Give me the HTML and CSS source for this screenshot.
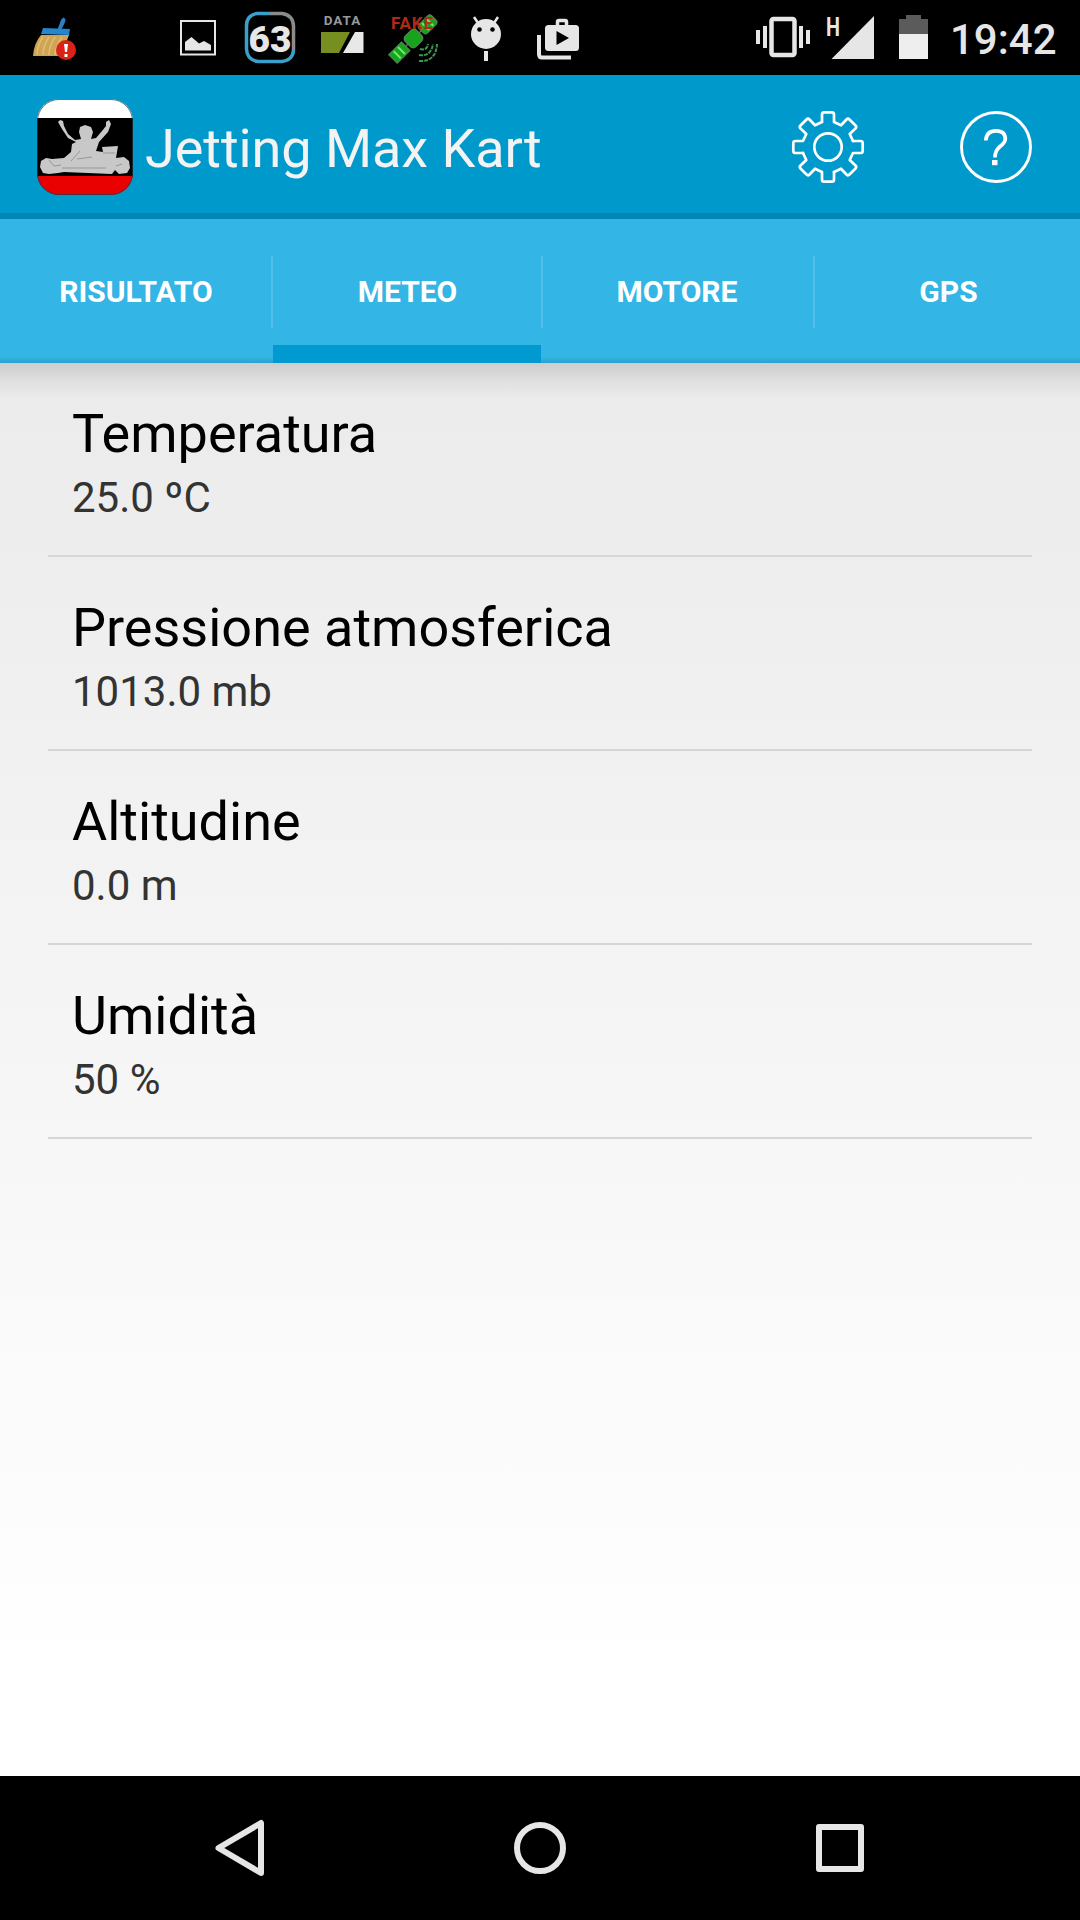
FILE: index.html
```html
<!DOCTYPE html>
<html lang="it">
<head>
<meta charset="utf-8">
<title>Jetting Max Kart</title>
<link rel="stylesheet" href="styles.css">
</head>
<body>
<header class="status">
  <div class="notifications">
    <svg class="slot" viewBox="18 0 72 75">
      <path d="M57 31 61 20Q64 15 65.500 20Q65 24 60 31Z" fill="#2c7fc0"/>
      <path d="M43 28 70 29 69 35 41 34Z" fill="#2487cc"/>
      <path d="M41 35 69 35Q64 46 65 56L33 56Q34 43 41 35Z" fill="#cfa555"/>
      <path d="M43 37Q37 46 37 55M49 37Q43 46 43 55M55 37Q49 46 49 55M62 37Q56 46 55 55" stroke="#e2bd6e" stroke-width="1.500" fill="none"/>
      <circle cx="66" cy="50" r="10" fill="#d92317"/>
      <path d="M64 44h4l-1 8h-2zM64.500 54h3v3h-3z" fill="#fff"/>
    </svg>
    <svg class="slot" viewBox="90 0 72 75"></svg>
    <svg class="slot" viewBox="162 0 72 75">
      <rect x="181" y="21" width="34" height="33.500" fill="none" stroke="#e6e6e6" stroke-width="2"/>
      <path d="M185 50.500V42L191.500 37 199 43.500 204 41 211 45V50.500Z" fill="#e6e6e6"/>
    </svg>
    <svg class="slot" viewBox="234 0 72 75">
      <path d="M270 13.500H257Q246.500 15 246.500 26V49Q247 60 258 61.500H282Q293 60 293.500 50" fill="none" stroke="#3b9fc9" stroke-width="3.500"/>
      <path d="M270 13.500H282Q293 15 293.500 26V50" fill="none" stroke="#8b8b8b" stroke-width="3.500"/>
      <text class="badge-text" x="270" y="51.500" text-anchor="middle">63</text>
    </svg>
    <svg class="slot" viewBox="306 0 72 75">
      <text class="data-text" x="342.500" y="25" text-anchor="middle">DATA</text>
      <path d="M321 32H350L339 53H321Z" fill="#778e20"/><path d="M355 32H363.500V53H343Z" fill="#e8e8e8"/>
    </svg>
    <svg class="slot" viewBox="378 0 72 75">
      <g transform="translate(413.500 38.500) rotate(-45)" fill="#17a31c" stroke="#5b7f5b" stroke-width="1.200">
        <path d="M-12 0H12"/>
        <rect x="-29" y="-6" width="18" height="12"/><path d="M-23-5V5M-17-5V5" stroke="#6bea6b" stroke-width="2"/>
        <rect x="-8" y="-7.500" width="16" height="15" rx="4"/>
        <rect x="11" y="-6" width="18" height="12" rx="3"/><path d="M17-5V5M23-5V5" stroke="#6bea6b" stroke-width="2"/>
      </g>
      <g fill="none" stroke="#3a9950" stroke-width="2" stroke-dasharray="4 1"><path d="M420 49Q427 51 428 44"/><path d="M419 55Q431 57 433 44"/><path d="M419 61Q436 62 437 44"/></g>
      <text class="fake-text" x="391" y="29" textLength="42">FAKE</text>
    </svg>
    <svg class="slot" viewBox="450 0 72 75">
      <path d="M474 17 478 23M498 17 494 23" stroke="#e6e6e6" stroke-width="2.500"/>
      <circle cx="486" cy="34" r="15" fill="#e6e6e6"/><circle cx="479.500" cy="29.500" r="2.300"/><circle cx="492.500" cy="29.500" r="2.300"/>
      <path d="M484 51h4v10h-4z" fill="#e6e6e6"/>
    </svg>
    <svg class="slot" viewBox="522 0 72 75">
      <path d="M539 35V54Q539 57.500 542 57.500H571" stroke="#e6e6e6" stroke-width="4" fill="none"/>
      <path d="M557.500 26V22Q557.500 20.500 559 20.500H565Q566.500 20.500 566.500 22V26" stroke="#e6e6e6" stroke-width="3.500" fill="none"/>
      <rect x="545" y="25" width="34" height="26" rx="3.500" fill="#e6e6e6"/><path d="M556.500 31 569 38 556.500 45Z"/>
    </svg>
  </div>
  <div class="system">
    <svg width="310" height="75" viewBox="750 0 310 75" fill="#e6e6e6">
      <path d="M756 30h4v14h-4zM763 26h4v22h-4zM799 26h4v22h-4zM806 30h4v14h-4z"/>
      <rect x="771.500" y="19" width="23" height="36" rx="2" fill="none" stroke="#e6e6e6" stroke-width="4.500"/>
      <text class="net-text" x="826" y="35.500" textLength="14" lengthAdjust="spacingAndGlyphs">H</text>
      <path d="M874 16V59H831.500Z"/>
      <path d="M899 34V19H906V15H921V19H928V34Z" fill="#5b5b5b"/><path d="M899 34H928V59H899Z" fill="#eee"/>
      <text class="clock" x="950" y="54">19:42</text>
    </svg>
  </div>
</header>
<div class="actionbar">
  <svg class="logo" viewBox="0 0 96 96">
    <defs><clipPath id="logo-shape"><rect width="96" height="96" rx="22"/></clipPath></defs>
    <g clip-path="url(#logo-shape)"><path fill="#fff" d="M0 0h96v20H0z"/><path d="M0 19h96v59H0z"/><path fill="#e90000" d="M0 77h96v19H0z"/></g>
    <rect x=".5" y=".5" width="95" height="95" rx="21.500" fill="none" stroke="#1a3c49" stroke-opacity=".7"/>
    <path fill="#c8c8c8" d="M21 23 23 21 26 22 27 27 31 35 38 41 44 40 42 33 43 28 48 26 54 28 56 33 54 40 59 39 65 32 69 27 69 23 72 21 74 25 71 33 62 43 59 52 66 53 65 48 81 47 79 59 87 58 92 62 93 69 90 74 82 75 78 71 75 75 27 73 21 74 12 75 6 74 3 68 4 62 9 59 15 60 27 59 34 53 35 45 39 43 31 39 25 30Z"/>
    <path d="M12 61 17 67 24 66M25 69H69M40 60 55 58M79 67 85 65M34 62 43 52M66 54H78" stroke="#979797" fill="none"/>
  </svg>
  <h1 class="title">Jetting Max Kart</h1>
  <svg class="action" viewBox="-42 -42 84 84" fill="none" stroke="#fff" stroke-width="2.700" stroke-linejoin="round" stroke-linecap="round">
    <defs><path id="gear-quarter" d="M-6-25-13-21.700-18.500-27.500Q-20-29-21.700-27.300L-27.300-21.700Q-29-20-27.500-18.500L-21.700-13-25-6H-32.500Q-34.700-6-34.700-4V4Q-34.700 6-32.500 6H-25"/></defs>
    <use href="#gear-quarter"/><use href="#gear-quarter" transform="rotate(90)"/><use href="#gear-quarter" transform="rotate(180)"/><use href="#gear-quarter" transform="rotate(270)"/>
    <circle r="13.700"/>
  </svg>
  <svg class="action" viewBox="-42 -42 84 84">
    <circle r="34.500" fill="none" stroke="#fff" stroke-width="2.900"/>
    <path d="M-10.200-6.500Q-9.700-16.200 0-16.200Q9.300-16.200 9.300-8Q9.300-4.500 4-0.500Q-1 3.500-1 10.500" fill="none" stroke="#fff" stroke-width="3.700"/>
    <path d="M-4 13h5.500v5.200h-5.500z" fill="#fff"/>
  </svg>
</div>
<nav class="tabs">
  <div class="tab">RISULTATO</div><div class="tab active">METEO</div><div class="tab">MOTORE</div><div class="tab">GPS</div>
</nav>
<main class="content">
  <section class="row"><h2>Temperatura</h2><p>25.0 ºC</p></section>
  <section class="row"><h2>Pressione atmosferica</h2><p>1013.0 mb</p></section>
  <section class="row"><h2>Altitudine</h2><p>0.0 m</p></section>
  <section class="row"><h2>Umidità</h2><p>50 %</p></section>
</main>
<footer class="navbar">
  <svg viewBox="0 0 1080 144" fill="none" stroke="#e6e6e6" stroke-width="6" stroke-linejoin="round"><path d="M218.500 72 261 47V97Z"/><circle cx="540" cy="72" r="23"/><rect x="819" y="51" width="42" height="42"/></svg>
</footer>
</body>
</html>
```
FILE: styles.css
```css
* { box-sizing: border-box; margin: 0; padding: 0; }
body { width: 1080px; height: 1920px; display: flex; flex-direction: column; font-family: Roboto, sans-serif; overflow: hidden; }
svg { display: block; flex: none; }
.status { height: 75px; background: #000; display: flex; justify-content: space-between; padding: 0 20px 0 18px; }
.notifications { display: flex; }
.slot { width: 72px; height: 75px; }
.badge-text { font: 900 37px Roboto, sans-serif; fill: #e6e6e6; }
.data-text { font: 700 13.5px Roboto, sans-serif; letter-spacing: 1px; fill: #999; }
.fake-text { font: 700 17px Roboto, sans-serif; fill: #b32816; }
.net-text { font: 700 25px Roboto, sans-serif; }
.clock { font: 500 42px Roboto, sans-serif; }
.actionbar { height: 144px; background: #0099cc; border-bottom: 6px solid #0086b3; display: flex; align-items: center; padding: 6px 42px 0 37px; }
.logo { width: 96px; height: 96px; }
.title { flex: 1; margin-left: 12px; padding-top: 2px; font-size: 54px; font-weight: 400; letter-spacing: -.06px; color: #f3f3f3; }
.action { width: 84px; height: 84px; }
.action + .action { margin-left: 84px; }
.tabs { height: 144px; background: linear-gradient(#33b5e5 138px, #2da1cc 144px); display: grid; grid-template-columns: 273px 270px 272px 265px; }
.tab { display: flex; align-items: center; justify-content: center; padding: 0 2px 0 1px; color: #fff; font-size: 30px; font-weight: 700; background: linear-gradient(#52c0e9, #52c0e9) right 37px / 2px 72px no-repeat; }
.tab:nth-child(3) { padding: 0 4px 0 0; }
.tab:last-child { padding: 0 0 0 2px; background: none; }
.tab.active { background: linear-gradient(#52c0e9, #52c0e9) right 37px / 2px 72px no-repeat, linear-gradient(#0099d0, #0099d0) left bottom / 268px 18px no-repeat; }
.content { flex: 1; padding: 0 48px; background: linear-gradient(rgba(0,0,0,.13), rgba(0,0,0,.05) 18px, transparent 36px), linear-gradient(#ebebeb, #fff 93%); }
.row { height: 194px; border-bottom: 2px solid #d6d6d6; padding: 39px 24px 0; }
.row h2 { font-size: 54px; line-height: 64px; font-weight: 400; color: #000; }
.row p { font-size: 42px; line-height: 50px; margin-top: 7px; color: #333; }
.navbar { height: 144px; background: #000; }
```
